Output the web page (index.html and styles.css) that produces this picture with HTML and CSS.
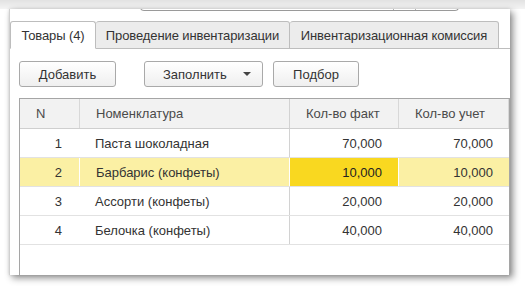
FILE: index.html
```html
<!DOCTYPE html>
<html lang="ru">
<head>
<meta charset="utf-8">
<link rel="stylesheet" href="styles.css">
</head>
<body>
<div class="stage">
  <div class="panel">
    <div class="top-field"><span class="seg"></span><span class="seg"></span></div>
    <div class="tabs">
      <div class="tab tab-1 active">Товары (4)</div>
      <div class="tab tab-2">Проведение инвентаризации</div>
      <div class="tab tab-3">Инвентаризационная комиссия</div>
      <div class="tab-rest"></div>
    </div>
    <div class="toolbar">
      <button class="btn btn-add">Добавить</button>
      <button class="btn btn-fill">Заполнить <span class="caret"></span></button>
      <button class="btn btn-pick">Подбор</button>
    </div>
    <div class="grid">
      <div class="row head">
        <div class="c c-n">N</div>
        <div class="c c-name">Номенклатура</div>
        <div class="c c-fact">Кол-во факт</div>
        <div class="c c-acc">Кол-во учет</div>
      </div>
      <div class="row">
        <div class="c c-n num">1</div>
        <div class="c c-name">Паста шоколадная</div>
        <div class="c c-fact num">70,000</div>
        <div class="c c-acc num">70,000</div>
      </div>
      <div class="row sel">
        <div class="c c-n num">2</div>
        <div class="c c-name">Барбарис (конфеты)</div>
        <div class="c c-fact num cur">10,000</div>
        <div class="c c-acc num">10,000</div>
      </div>
      <div class="row">
        <div class="c c-n num">3</div>
        <div class="c c-name">Ассорти (конфеты)</div>
        <div class="c c-fact num">20,000</div>
        <div class="c c-acc num">20,000</div>
      </div>
      <div class="row">
        <div class="c c-n num">4</div>
        <div class="c c-name">Белочка (конфеты)</div>
        <div class="c c-fact num">40,000</div>
        <div class="c c-acc num">40,000</div>
      </div>
    </div>
  </div>
</div>
</body>
</html>
```
FILE: styles.css
```css
* { box-sizing: border-box; }
html, body { margin: 0; padding: 0; }
body {
  width: 525px;
  height: 290px;
  overflow: hidden;
  background: #ffffff;
  font-family: "Liberation Sans", Arial, sans-serif;
  font-size: 13px;
  color: #333333;
}
.stage {
  padding: 9px 0 0 9px;
  background: linear-gradient(#e2e2e2, #f4f4f4 9px, #ffffff 9px);
}
.panel {
  position: relative;
  width: 501px;
  height: 266px;
  background: #ffffff;
  border-left: 1px solid #d0d0d0;
  box-shadow: 3px 3px 7px rgba(0, 0, 0, 0.45), 0 0 3px rgba(0, 0, 0, 0.12);
  padding-top: 12px;
  overflow: hidden;
}
.top-field {
  position: absolute;
  left: 130px;
  top: -12px;
  width: 319px;
  height: 14px;
  border: 1px solid #9a9a9a;
  border-top: none;
  border-radius: 0 0 4px 4px;
  display: flex;
  justify-content: flex-end;
  padding-right: 21px;
}
.top-field .seg {
  width: 22px;
  border-left: 1px solid #b0b0b0;
}
.tabs {
  display: flex;
  height: 28px;
}
.tab {
  height: 28px;
  padding: 0;
  text-align: center;
  line-height: 27px;
  background: #ececec;
  border: 1px solid #bdbdbd;
  border-left: none;
  border-radius: 3px 3px 0 0;
  color: #333;
  white-space: nowrap;
  letter-spacing: -0.1px;
}
.tab-1 { width: 86px; border-left: 1px solid #bdbdbd; }
.tab-2 { width: 194px; }
.tab-3 { width: 209px; }
.tab.active {
  background: #ffffff;
  border-bottom-color: #ffffff;
}
.tab-rest {
  flex: 1;
  border-bottom: 1px solid #bdbdbd;
}
.toolbar {
  display: flex;
  padding: 12px 0 0 9px;
  height: 49px;
}
.btn {
  height: 26px;
  font-family: inherit;
  font-size: 13px;
  color: #333;
  background: linear-gradient(#ffffff, #efefef);
  border: 1px solid #a9a9a9;
  border-radius: 3px;
  padding: 0;
  display: flex;
  align-items: center;
  justify-content: center;
}
.btn-add { width: 97px; }
.btn-fill { width: 119px; margin-left: 28px; justify-content: flex-start; padding-left: 18px; }
.btn-fill .caret {
  margin-left: auto;
  margin-right: 11px;
  width: 0;
  height: 0;
  border-left: 4px solid transparent;
  border-right: 4px solid transparent;
  border-top: 4px solid #444;
}
.btn-pick { width: 86px; margin-left: 10px; }
.grid {
  margin-left: 9px;
  width: 491px;
  height: 200px;
  border: 1px solid #a5a5a5;
  border-bottom: none;
}
.row {
  display: flex;
  height: 29px;
  border-bottom: 1px solid #e2e2e2;
}
.row.head {
  height: 30px;
  background: #f2f2f2;
  border-bottom: 1px solid #cfcfcf;
  color: #4a4a4a;
}
.c {
  display: flex;
  align-items: center;
  padding: 0 16px 0 16px;
  white-space: nowrap;
}
.c-n { width: 59px; }
.c-name { width: 210px; }
.c-fact { width: 109px; border-left: 1px solid #d2d2d2; }
.c-acc { flex: 1; }
.head .c-name { border-left: 1px solid #d8d8d8; }
.head .c-acc { border-left: 1px solid #d8d8d8; border-right: 1px solid #d8d8d8; }
.num { justify-content: flex-end; }
.row .c-n.num { padding-right: 17px; }
.row.sel { background: #fbf0a4; }
.row.sel .c-name { border-left: 1px solid #ffffff; }
.row.sel .c-acc { border-left: 1px solid #ffffff; }
.row.sel .c-fact { border-left: 1px solid #ffffff; }
.cur { background: #f9d820; color: #222; }
```
